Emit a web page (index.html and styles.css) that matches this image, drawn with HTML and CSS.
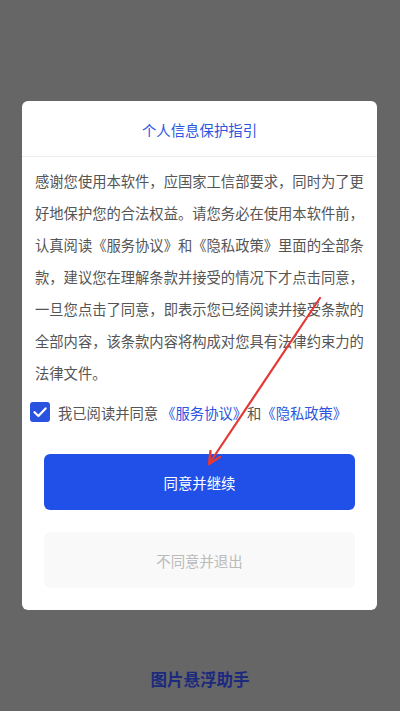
FILE: index.html
```html
<!DOCTYPE html>
<html lang="zh-CN">
<head>
  <meta charset="UTF-8">
  <meta name="viewport" content="width=device-width, initial-scale=1.0">
  <title>个人信息保护指引</title>
  <link rel="stylesheet" href="styles.css">
</head>
<body>
  <div class="dialog">
    <div class="dialog-title">个人信息保护指引</div>
    <p class="dialog-text">感谢您使用本软件，应国家工信部要求，同时为了更好地保护您的合法权益。请您务必在使用本软件前，认真阅读《服务协议》和《隐私政策》里面的全部条款，建议您在理解条款并接受的情况下才点击同意，一旦您点击了同意，即表示您已经阅读并接受条款的全部内容，该条款内容将构成对您具有法律约束力的法律文件。</p>

    <label class="agree">
      <span class="check">
        <svg viewBox="0 0 20 20" width="20" height="20">
          <path d="M4.5 10.2 L8.4 14 L15.6 6.4" fill="none" stroke="#fff" stroke-width="2.2" stroke-linecap="round" stroke-linejoin="round"/>
        </svg>
      </span>
      <span>我已阅读并同意 <a class="link">《服务协议》</a>和<a class="link">《隐私政策》</a></span>
    </label>

    <button class="btn btn-primary">同意并继续</button>
    <button class="btn btn-plain">不同意并退出</button>
  </div>

  <div class="app-name">图片悬浮助手</div>

  <!-- red pointer drawn over the dialog -->
  <svg class="pointer" width="400" height="711" viewBox="0 0 400 711">
    <line x1="320" y1="298" x2="209" y2="464" stroke="#e53935" stroke-width="2.2" stroke-linecap="round"/>
    <path d="M209 464 L210.5 451 M209 464 L220 457" fill="none" stroke="#e53935" stroke-width="2.4" stroke-linecap="round"/>
  </svg>
</body>
</html>
```

FILE: styles.css
```css
body {
  margin: 0;
  background: #666666;
  font-family: "Noto Sans CJK SC", "Noto Sans", sans-serif;
  height: 711px;
  overflow: hidden;
}
.dialog {
  width: 355px;
  margin: 101px 0 0 22px;
  background: #fff;
  border-radius: 6px;
  padding-bottom: 22px;
}
.dialog-title {
  height: 55px;
  line-height: 57px;
  text-align: center;
  font-size: 14.4px;
  color: #2b56e0;
  border-bottom: 1px solid #ececec;
}
.dialog-text {
  margin: 8px 0 0 13px;
  width: 332px;
  font-size: 14.3px;
  line-height: 32px;
  color: #555;
}
.agree {
  display: flex;
  align-items: center;
  gap: 8px;
  margin: 13px 0 0 8px;
  height: 20px;
  font-size: 14.3px;
  color: #555;
}
.check {
  width: 20px;
  height: 20px;
  border-radius: 3px;
  background: #2a52e0;
  display: flex;
}
.link {
  color: #2b56e0;
}
.btn {
  display: block;
  width: 311px;
  height: 56px;
  margin: 0 0 0 22px;
  border: none;
  border-radius: 6px;
  font-family: inherit;
  font-size: 14.4px;
}
.btn-primary {
  margin-top: 32px;
  background: #2150e8;
  color: #fff;
}
.btn-plain {
  margin-top: 22px;
  background: #f9f9f9;
  color: #bbb;
}
.app-name {
  margin-top: 57px;
  text-align: center;
  font-size: 16.5px;
  font-weight: bold;
  color: #1c2a7e;
}
.pointer {
  position: absolute;
  left: 0;
  top: 0;
  pointer-events: none;
}
```
